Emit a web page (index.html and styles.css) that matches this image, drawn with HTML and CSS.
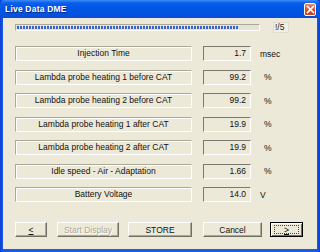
FILE: index.html
```html
<!DOCTYPE html>
<html>
<head>
<meta charset="utf-8">
<link rel="stylesheet" href="styles.css">
</head>
<body>
<div class="window">
  <div class="titlebar">
    <span class="title">Live Data DME</span>
    <span class="close"><svg width="9" height="9" viewBox="0 0 9 9"><path d="M1.5 1.5 L7.5 7.5 M7.5 1.5 L1.5 7.5" stroke="#fff" stroke-width="1.6" stroke-linecap="square"/></svg></span>
  </div>
  <div class="client">
    <div class="progress-row">
      <div class="progress"><div class="fill" style="width:222px"></div></div>
      <div class="counter">!/5</div>
    </div>
    <div class="rows">
      <div class="row"><div class="label">Injection Time</div><div class="value">1.7</div><div class="unit">msec</div></div>
      <div class="row"><div class="label">Lambda probe heating 1 before CAT</div><div class="value">99.2</div><div class="unit pct">%</div></div>
      <div class="row"><div class="label">Lambda probe heating 2 before CAT</div><div class="value">99.2</div><div class="unit pct">%</div></div>
      <div class="row"><div class="label">Lambda probe heating 1 after CAT</div><div class="value">19.9</div><div class="unit pct">%</div></div>
      <div class="row"><div class="label">Lambda probe heating 2 after CAT</div><div class="value">19.9</div><div class="unit pct">%</div></div>
      <div class="row"><div class="label">Idle speed - Air - Adaptation</div><div class="value">1.66</div><div class="unit pct">%</div></div>
      <div class="row"><div class="label">Battery Voltage</div><div class="value">14.0</div><div class="unit">V</div></div>
    </div>
    <div class="buttons">
      <div class="btn b-prev"><u>&lt;</u></div>
      <div class="btn b-start disabled">Start Display</div>
      <div class="btn b-store">STORE</div>
      <div class="btn b-cancel">Cancel</div>
      <div class="btn b-next default"><span class="focus"><u>&gt;</u></span></div>
    </div>
  </div>
</div>
</body>
</html>
```

FILE: styles.css
```css
html, body {
  margin: 0;
  padding: 0;
  background: #ffffff;
}
body {
  font-family: "Liberation Sans", Arial, sans-serif;
  font-size: 8.5px;
  color: #000;
}
.window {
  width: 320px;
  height: 252px;
  display: flex;
  flex-direction: column;
  background: linear-gradient(90deg, #0a3fd0 0, #1a5ae8 3px, #1a5ae8 317px, #0a3fd0 320px);
  box-sizing: border-box;
}
.titlebar {
  height: 18px;
  flex: none;
  display: flex;
  align-items: center;
  justify-content: space-between;
  padding: 0 4px 0 5px;
  background: linear-gradient(180deg, #3d8cf5 0, #0a5ded 3px, #0055e5 9px, #0253e2 14px, #0a4bd8 18px);
  border-radius: 5px 5px 0 0;
}
.title {
  color: #fff;
  font-weight: bold;
  font-size: 8.5px;
  letter-spacing: 0.2px;
  text-shadow: 1px 1px 0 #0a2a8a;
}
.close {
  width: 12px;
  height: 13px;
  box-sizing: border-box;
  border: 1px solid #fff;
  border-radius: 2px;
  background: linear-gradient(180deg, #e8866a 0, #d9532e 50%, #c8401c 100%);
  display: flex;
  align-items: center;
  justify-content: center;
  margin-top: 1px;
  margin-right: 0;
}
.close svg { display: block; }
.client {
  flex: 1;
  margin: 0 3px 3px 3px;
  background: #ece9d8;
  padding: 0 0 0 12px;
  display: flex;
  flex-direction: column;
}
.progress-row {
  display: flex;
  align-items: center;
  height: 11px;
  margin-top: 4px;
}
.progress {
  width: 245px;
  height: 7px;
  box-sizing: border-box;
  border-top: 1px solid #aca899;
  border-left: 1px solid #aca899;
  border-bottom: 1px solid #fff;
  border-right: 1px solid #fff;
  background: #e6e3d3;
  padding: 1px;
}
.fill {
  height: 100%;
  background: repeating-linear-gradient(90deg, #3d64c8 0, #3d64c8 2px, transparent 2px, transparent 3px);
}
.counter {
  margin-left: 13px;
  width: 16px;
  height: 11px;
  box-sizing: border-box;
  background: #f1efe4;
  border: 1px solid #e0ddcc;
  line-height: 9px;
  padding-left: 1px;
  color: #222;
}
.rows {
  margin-top: 13px;
  display: flex;
  flex-direction: column;
  gap: 8.5px;
}
.row {
  display: flex;
  align-items: center;
  height: 15px;
}
.label {
  width: 177px;
  height: 15px;
  box-sizing: border-box;
  border-top: 1px solid #aca899;
  border-left: 1px solid #aca899;
  border-bottom: 1px solid #fff;
  border-right: 1px solid #fff;
  box-shadow: inset 1px 1px 0 #fff, 1px 1px 0 #aca899 inset;
  background: #ece9d8;
  text-align: center;
  line-height: 13px;
  color: #111;
}
.value {
  margin-left: 11px;
  width: 48px;
  height: 15px;
  box-sizing: border-box;
  border-top: 1px solid #7c7a70;
  border-left: 1px solid #7c7a70;
  border-bottom: 1px solid #fff;
  border-right: 1px solid #fff;
  background: #ece9d8;
  text-align: right;
  padding-right: 4px;
  line-height: 13px;
  color: #111;
}
.unit {
  margin-left: 9px;
  color: #111;
}
.unit.pct { margin-left: 13px; }
.buttons {
  margin-top: 20px;
  display: flex;
  align-items: center;
}
.btn {
  height: 15px;
  box-sizing: border-box;
  border-top: 1px solid #fff;
  border-left: 1px solid #fff;
  border-right: 1px solid #716f64;
  border-bottom: 1px solid #716f64;
  box-shadow: inset -1px -1px 0 #aca899;
  background: #ece9d8;
  display: flex;
  align-items: center;
  justify-content: center;
  color: #111;
}
.b-prev { width: 32px; }
.b-start { width: 62px; margin-left: 10px; }
.b-store { width: 64px; margin-left: 9px; }
.b-cancel { width: 59px; margin-left: 11px; }
.b-next { width: 33px; margin-left: 8px; }
.disabled {
  color: #aca899;
  text-shadow: 1px 1px 0 #fff;
}
.default {
  border: 1px solid #000;
  box-shadow: inset 1px 1px 0 #fff, inset -1px -1px 0 #716f64;
}
.focus {
  width: 25px;
  height: 9px;
  box-sizing: border-box;
  border: 1px dotted #444;
  display: flex;
  align-items: center;
  justify-content: center;
  line-height: 8px;
}
u { text-decoration: underline; }
```
